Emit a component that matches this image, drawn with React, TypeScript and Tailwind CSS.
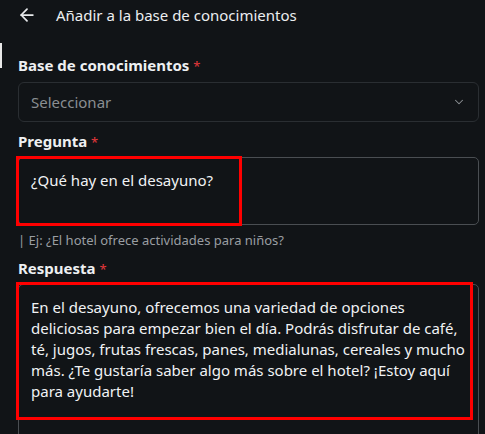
import { ArrowLeft, ChevronDown } from "lucide-react"

const font = { fontFamily: "'Noto Sans', 'Open Sans', sans-serif" }

function Label({ text }: { text: string }) {
  return (
    <div className="text-[15px] leading-[20px] font-bold text-[#eef0f2]">
      {text} <span className="text-[#e5383b] text-[13px] font-normal">*</span>
    </div>
  )
}

export default function App() {
  return (
    <div className="relative w-[485px] h-[434px] overflow-hidden bg-[#111417]" style={font}>
      {/* header */}
      <div className="flex items-center h-[30px]">
        <ArrowLeft className="ml-[17px] text-[#e8eaec]" size={20} strokeWidth={2.1} />
        <span className="ml-[19px] text-[15px] text-[#eceef0]">Añadir a la base de conocimientos</span>
      </div>

      {/* focus bar on the left edge */}
      <div className="absolute left-0 top-[43px] h-[25px] w-[2px] bg-[#e8e8e8]" />

      <div className="pl-[18px] pr-[6px] pt-[25px]">
        <Label text="Base de conocimientos" />
        <div className="mt-[6px] h-[40px] flex items-center justify-between rounded-[6px] border border-[#2a2e32] pl-[12px] pr-[12px]">
          <span className="text-[15px] text-[#8a8e92]">Seleccionar</span>
          <ChevronDown size={14} strokeWidth={1.8} className="text-[#8d9195]" />
        </div>

        <div className="mt-[9px]">
          <Label text="Pregunta" />
        </div>
        <div className="relative mt-[5px] h-[68px] rounded-[5px] border border-[#4a4e52] px-[12px] pt-[12px]">
          <div className="text-[15px] leading-[21px] text-[#f0f2f4]">¿Qué hay en el desayuno?</div>
          <div className="absolute left-[-3px] top-[-2px] w-[226px] h-[70px] border-[3px] border-[#ff0000]" />
        </div>
        <div className="mt-[6px] text-[13px] leading-[18px] text-[#9a9ea2]">| Ej: ¿El hotel ofrece actividades para niños?</div>

        <div className="mt-[9px]">
          <Label text="Respuesta" />
        </div>
        <div className="relative mt-[5px] h-[180px] rounded-[5px] border border-[#4a4e52] pl-[12px] pr-[4px] pt-[12px]">
          <div className="text-[15px] leading-[21px] text-[#f0f2f4]">
            En el desayuno, ofrecemos una variedad de opciones deliciosas para empezar bien el día. Podrás disfrutar de café, té, jugos, frutas frescas, panes, medialunas, cereales y mucho más. ¿Te gustaría saber algo más sobre el hotel? ¡Estoy aquí para ayudarte!
          </div>
          <div className="absolute left-[-3px] top-[-3px] w-[457px] h-[138px] border-[3px] border-[#ff0000]" />
        </div>
      </div>
    </div>
  )
}
